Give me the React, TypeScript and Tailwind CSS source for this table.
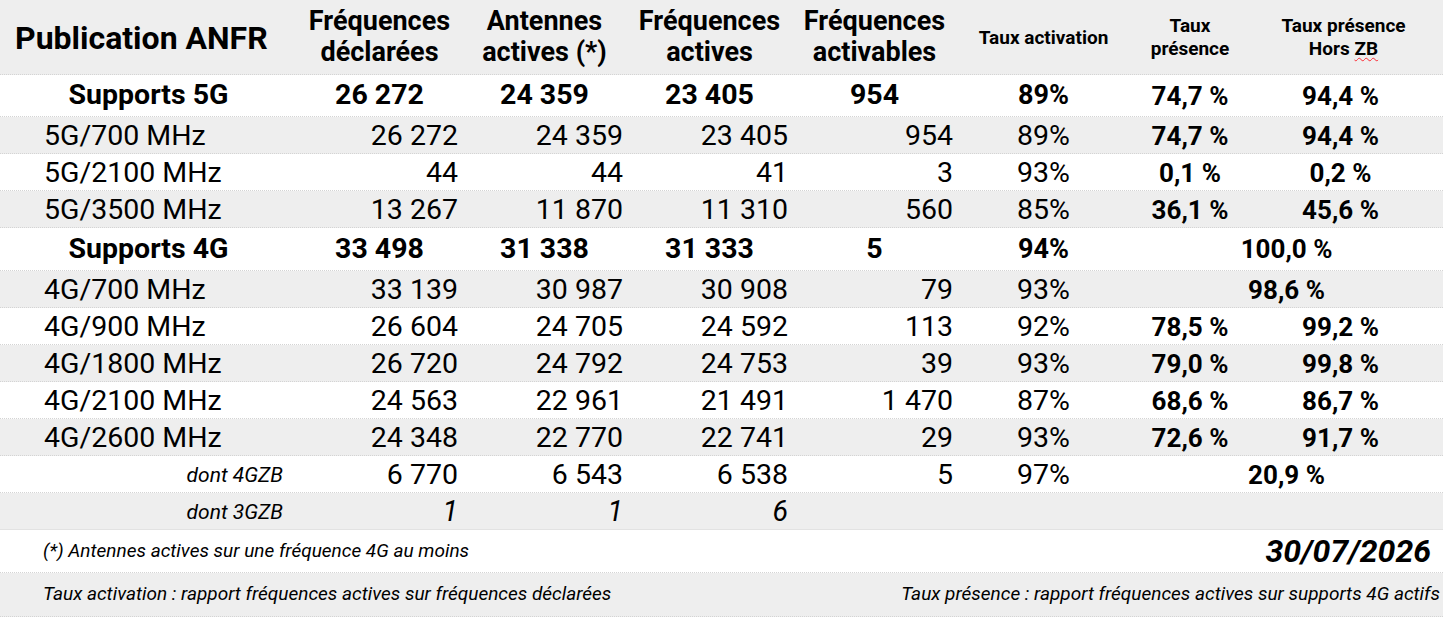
const cols = "grid grid-cols-[297px_165px_165px_165px_165px_173px_120px_193px]";

type Row = {
  label: string;
  values: string[];
  act: string;
  pres?: string;
  hors?: string;
  span?: string;
  bg: string;
};

const rows5G: Row[] = [
  { label: "5G/700 MHz", values: ["26 272", "24 359", "23 405", "954"], act: "89%", pres: "74,7 %", hors: "94,4 %", bg: "bg-[#eeeeee]" },
  { label: "5G/2100 MHz", values: ["44", "44", "41", "3"], act: "93%", pres: "0,1 %", hors: "0,2 %", bg: "bg-white" },
  { label: "5G/3500 MHz", values: ["13 267", "11 870", "11 310", "560"], act: "85%", pres: "36,1 %", hors: "45,6 %", bg: "bg-[#eeeeee]" },
];

const rows4G: Row[] = [
  { label: "4G/700 MHz", values: ["33 139", "30 987", "30 908", "79"], act: "93%", span: "98,6 %", bg: "bg-[#eeeeee]" },
  { label: "4G/900 MHz", values: ["26 604", "24 705", "24 592", "113"], act: "92%", pres: "78,5 %", hors: "99,2 %", bg: "bg-white" },
  { label: "4G/1800 MHz", values: ["26 720", "24 792", "24 753", "39"], act: "93%", pres: "79,0 %", hors: "99,8 %", bg: "bg-[#eeeeee]" },
  { label: "4G/2100 MHz", values: ["24 563", "22 961", "21 491", "1 470"], act: "87%", pres: "68,6 %", hors: "86,7 %", bg: "bg-white" },
  { label: "4G/2600 MHz", values: ["24 348", "22 770", "22 741", "29"], act: "93%", pres: "72,6 %", hors: "91,7 %", bg: "bg-[#eeeeee]" },
];

function DataRow({ row }: { row: Row }) {
  return (
    <div className={`${cols} ${row.bg} h-[37px] pt-[2px] items-center border-b border-dotted border-[#d4d4d4] text-[28.5px] leading-none`}>
      <div className="pl-[44px]">{row.label}</div>
      {row.values.map((v, i) => (
        <div key={i} className="text-right pr-[4px]">{v}</div>
      ))}
      <div className="text-center">{row.act}</div>
      {row.span ? (
        <div className="col-span-2 text-center font-bold text-[26px]">{row.span}</div>
      ) : (
        <>
          <div className="text-center font-bold text-[26px]">{row.pres}</div>
          <div className="text-center font-bold text-[26px] pr-[12px]">{row.hors}</div>
        </>
      )}
    </div>
  );
}

function GroupRow({ label, values, act, pres, hors, span, h }: { label: string; values: string[]; act: string; pres?: string; hors?: string; span?: string; h: string }) {
  return (
    <div className={`${cols} bg-white ${h} items-center border-b border-dotted border-[#d4d4d4] text-[28.5px] leading-none font-bold`}>
      <div className="text-center">{label}</div>
      {values.map((v, i) => (
        <div key={i} className="text-center">{v}</div>
      ))}
      <div className="text-center text-[27px]">{act}</div>
      {span ? (
        <div className="col-span-2 text-center text-[26px]">{span}</div>
      ) : (
        <>
          <div className="text-center text-[26px]">{pres}</div>
          <div className="text-center text-[26px] pr-[12px]">{hors}</div>
        </>
      )}
    </div>
  );
}

export default function App() {
  return (
    <div className="w-[1443px] bg-white text-black font-['Roboto',sans-serif]">
      {/* Header */}
      <div className={`${cols} bg-[#eeeeee] h-[75px] items-center border-b border-dotted border-[#d4d4d4] font-bold`}>
        <div className="pl-[15px] text-[32px] pt-[2px]">Publication ANFR</div>
        <div className="text-center text-[27px] leading-[31px]">Fréquences<br />déclarées</div>
        <div className="text-center text-[27px] leading-[31px]">Antennes<br />actives (*)</div>
        <div className="text-center text-[27px] leading-[31px]">Fréquences<br />actives</div>
        <div className="text-center text-[27px] leading-[31px]">Fréquences<br />activables</div>
        <div className="text-center text-[19px] leading-[23px]">Taux activation</div>
        <div className="text-center text-[19px] leading-[23px]">Taux<br />présence</div>
        <div className="text-center text-[19px] leading-[23px] pr-[6px]">
          Taux présence<br />Hors <span className="underline decoration-wavy decoration-red-500 decoration-1 underline-offset-2">ZB</span>
        </div>
      </div>

      <GroupRow label="Supports 5G" values={["26 272", "24 359", "23 405", "954"]} act="89%" pres="74,7 %" hors="94,4 %" h="h-[42px]" />
      {rows5G.map((r) => (
        <DataRow key={r.label} row={r} />
      ))}

      <GroupRow label="Supports 4G" values={["33 498", "31 338", "31 333", "5"]} act="94%" span="100,0 %" h="h-[43px]" />
      {rows4G.map((r) => (
        <DataRow key={r.label} row={r} />
      ))}

      {/* ZB rows */}
      <div className={`${cols} bg-white h-[37px] pt-[2px] items-center border-b border-dotted border-[#d4d4d4] text-[28.5px] leading-none`}>
        <div className="text-right pr-[14px] italic text-[21px]">dont 4GZB</div>
        {["6 770", "6 543", "6 538", "5"].map((v, i) => (
          <div key={i} className="text-right pr-[4px]">{v}</div>
        ))}
        <div className="text-center">97%</div>
        <div className="col-span-2 text-center font-bold text-[26px]">20,9 %</div>
      </div>
      <div className={`${cols} bg-[#eeeeee] h-[37px] pt-[2px] items-center border-b border-[#e2e2e2] text-[28.5px] leading-none`}>
        <div className="text-right pr-[14px] italic text-[21px]">dont 3GZB</div>
        {["1", "1", "6"].map((v, i) => (
          <div key={i} className="text-right pr-[4px] italic">{v}</div>
        ))}
      </div>

      {/* Footnotes */}
      <div className="flex items-center justify-between h-[43px] bg-white border-b border-dotted border-[#d4d4d4] pl-[43px] pr-[12px]">
        <span className="italic text-[19px]">(*) Antennes actives sur une fréquence 4G au moins</span>
        <span className="italic font-bold text-[32px]">30/07/2026</span>
      </div>
      <div className="flex items-center justify-between h-[44px] bg-[#eeeeee] border-b border-dotted border-[#d4d4d4] pl-[43px] pr-[3px]">
        <span className="italic text-[19px]">Taux activation : rapport fréquences actives sur fréquences déclarées</span>
        <span className="italic text-[19px]">Taux présence : rapport fréquences actives sur supports 4G actifs</span>
      </div>
    </div>
  );
}
